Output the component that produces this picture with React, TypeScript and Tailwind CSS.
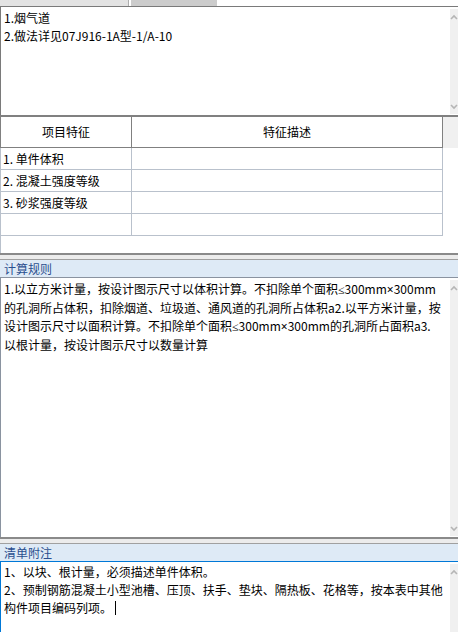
import React from 'react';

const cjk = { fontFamily: '"Noto Sans CJK SC", "Noto Sans", sans-serif' };

function ScrollBar({ className = '', showDown = true }: { className?: string; showDown?: boolean }) {
    return (
        <div className={`absolute right-0 w-[8px] bg-[#f0f0f0] flex flex-col justify-between items-start pt-[5px] pb-[4px] ${className}`}>
            <svg width="8" height="6" viewBox="0 0 8 6">
                <path d="M1 5 L4 2 L7 5" stroke="#b5b5b5" strokeWidth="1.6" fill="none" />
            </svg>
            {showDown && (
                <svg width="8" height="6" viewBox="0 0 8 6">
                    <path d="M1 1 L4 4 L7 1" stroke="#b5b5b5" strokeWidth="1.6" fill="none" />
                </svg>
            )}
        </div>
    );
}

function SectionHead({ title }: { title: string }) {
    return (
        <>
            <div className="h-[2px] bg-[#8a8a8a]" />
            <div className="h-[4px] bg-[#ececec]" />
            <div className="h-[1px] bg-[#a0a0a0]" />
            <div className="h-[17px] bg-[#deeaf6] pl-[4px] text-[12px] leading-[17px] text-[#2a4f8f]" style={cjk}>
                {title}
            </div>
        </>
    );
}

// narrow math glyphs like the reference font
function M({ c }: { c: string }) {
    return <span className="font-['Noto_Sans']">{c}</span>;
}

const features = ['1. 单件体积', '2. 混凝土强度等级', '3. 砂浆强度等级', ''];

export default function App() {
    return (
        <div className="w-[458px] h-[632px] overflow-hidden bg-white flex flex-col text-black">
            {/* tab strip */}
            <div className="h-[6px] flex">
                <div className="w-[129px] bg-[#e3e3e3] border-r border-[#adadad]" />
                <div className="w-[2px]" />
                <div className="w-[86px] bg-[#cccccc]" />
            </div>

            {/* description box */}
            <div className="relative h-[109px] border-t border-l border-[#7a7a7a] pt-[2px] pl-[3px] text-[12px] leading-[18px]" style={cjk}>
                <div>1.烟气道</div>
                <div>2.做法详见07J916-1A型-1/A-10</div>
                <ScrollBar className="top-[2px] bottom-[1px]" />
            </div>

            {/* feature table */}
            <div className="relative border-t-2 border-[#808080]">
                <div className="w-[443px] flex h-[31px] border-b border-r border-[#808080] text-[12px]" style={cjk}>
                    <div className="w-[132px] border-r border-l border-[#808080] flex items-center justify-center">项目特征</div>
                    <div className="flex-1 flex items-center justify-center">特征描述</div>
                </div>
                <div className="absolute right-0 top-0 w-[15px] h-[31px] bg-[#f0f0f0]" />
                {features.map((f, i) => (
                    <div key={i} className="w-[443px] flex h-[22px] border-b border-r border-[#b9c1cc] text-[12px]" style={cjk}>
                        <div className="w-[132px] border-r border-l border-[#b9c1cc] flex items-center pl-[2px] whitespace-nowrap">{f}</div>
                        <div className="flex-1" />
                    </div>
                ))}
                <div className="h-[17px] border-l border-[#b9c1cc]" />
            </div>

            {/* calculation rules */}
            <SectionHead title="计算规则" />
            <div className="relative h-[260px] border-t border-l border-[#8a93a0] pt-[2px] pl-[3px] text-[12px] leading-[18px] whitespace-nowrap" style={cjk}>
                <div>1.以立方米计量，按设计图示尺寸以体积计算。不扣除单个面积<M c="≤" />300mm<M c="×" />300mm</div>
                <div>的孔洞所占体积，扣除烟道、垃圾道、通风道的孔洞所占体积a2.以平方米计量，按</div>
                <div>设计图示尺寸以面积计算。不扣除单个面积<M c="≤" />300mm<M c="×" />300mm的孔洞所占面积a3.</div>
                <div>以根计量，按设计图示尺寸以数量计算</div>
                <ScrollBar className="top-[2px] bottom-[1px]" />
            </div>

            {/* list notes */}
            <SectionHead title="清单附注" />
            <div className="relative flex-1 border-t border-l border-[#0078d7] pt-[1px] pl-[3px] text-[12px] leading-[18px] whitespace-nowrap" style={cjk}>
                <div>1、以块、根计量，必须描述单件体积。</div>
                <div>2、预制钢筋混凝土小型池槽、压顶、扶手、垫块、隔热板、花格等，按本表中其他</div>
                <div className="flex items-center">
                    构件项目编码列项。
                    <span className="inline-block w-[1px] h-[14px] bg-black ml-[3px]" />
                </div>
                <ScrollBar className="top-[2px] bottom-0" showDown={false} />
            </div>
        </div>
    );
}
